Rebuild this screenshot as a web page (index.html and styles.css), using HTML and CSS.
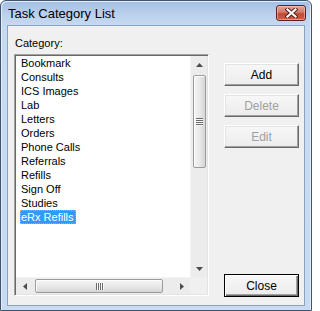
FILE: index.html
```html
<!DOCTYPE html>
<html>
<head>
<meta charset="utf-8">
<link rel="stylesheet" href="styles.css">
</head>
<body>
<div class="window">
  <div class="titlebar">
    <span class="title">Task Category List</span>
    <div class="close-x">
      <svg width="13" height="10" viewBox="0 0 13 10">
        <path d="M2.5 1.5 L10.5 8.5 M10.5 1.5 L2.5 8.5" stroke="#4a1c16" stroke-width="4" stroke-linecap="square" fill="none"/>
        <path d="M2.5 1.5 L10.5 8.5 M10.5 1.5 L2.5 8.5" stroke="#ffffff" stroke-width="2.2" stroke-linecap="square" fill="none"/>
      </svg>
    </div>
  </div>
  <div class="client">
    <div class="leftcol">
      <div class="label">Category:</div>
      <div class="listbox">
        <ul class="items">
          <li><span>Bookmark</span></li>
          <li><span>Consults</span></li>
          <li><span>ICS Images</span></li>
          <li><span>Lab</span></li>
          <li><span>Letters</span></li>
          <li><span>Orders</span></li>
          <li><span>Phone Calls</span></li>
          <li><span>Referrals</span></li>
          <li><span>Refills</span></li>
          <li><span>Sign Off</span></li>
          <li><span>Studies</span></li>
          <li class="selected"><span>eRx Refills</span></li>
        </ul>
        <div class="vscroll">
          <div class="arrow-btn"><svg width="7" height="4" viewBox="0 0 7 4"><polygon points="3.5,0 7,4 0,4" fill="#4d4d4d"/></svg></div>
          <div class="vtrack">
            <div class="vthumb">
              <div class="grip-h"><i></i><i></i><i></i><i></i></div>
            </div>
          </div>
          <div class="arrow-btn"><svg width="7" height="4" viewBox="0 0 7 4"><polygon points="0,0 7,0 3.5,4" fill="#4d4d4d"/></svg></div>
        </div>
        <div class="hscroll">
          <div class="arrow-btn"><svg width="4" height="7" viewBox="0 0 4 7"><polygon points="4,0 4,7 0,3.5" fill="#4d4d4d"/></svg></div>
          <div class="htrack">
            <div class="hthumb">
              <div class="grip-v"><i></i><i></i><i></i><i></i></div>
            </div>
          </div>
          <div class="arrow-btn"><svg width="4" height="7" viewBox="0 0 4 7"><polygon points="0,0 4,3.5 0,7" fill="#4d4d4d"/></svg></div>
        </div>
        <div class="corner"></div>
      </div>
    </div>
    <div class="rightcol">
      <button class="btn">Add</button>
      <button class="btn disabled">Delete</button>
      <button class="btn disabled">Edit</button>
      <button class="btn default close-btn">Close</button>
    </div>
  </div>
</div>
</body>
</html>
```
FILE: styles.css
```css
html, body {
  margin: 0;
  padding: 0;
  background: #ffffff;
}

body {
  font-family: "Liberation Sans", Arial, sans-serif;
  font-size: 11px;
  color: #000;
}

.window {
  width: 312px;
  height: 311px;
  box-sizing: border-box;
  border: 1px solid #3f5470;
  border-radius: 6px 6px 0 0;
  background: linear-gradient(to bottom, #a3bfe4 0px, #bcd1ec 14px, #c8daf0 26px, #c9dbf0 100%);
  padding: 0 6px 4px 6px;
  display: flex;
  flex-direction: column;
  box-shadow: inset 1px 1px 0 #e4edf8, inset -1px 0 0 #e4edf8;
}

.titlebar {
  height: 24px;
  display: flex;
  align-items: flex-start;
  flex-shrink: 0;
}

.title {
  font-family: "Liberation Sans", Arial, sans-serif;
  font-size: 13px;
  line-height: 25px;
  padding-left: 1px;
  color: #000;
}

.close-x {
  margin-left: auto;
  margin-right: -1px;
  margin-top: 4px;
  width: 30px;
  height: 16px;
  box-sizing: border-box;
  border: 1px solid #5e241c;
  border-radius: 3px;
  background: linear-gradient(to bottom, #e5a597 0%, #d27a68 45%, #c24a34 55%, #c9614a 100%);
  display: flex;
  align-items: center;
  justify-content: center;
  box-shadow: inset 0 0 0 1px rgba(255, 220, 210, 0.45);
}

.client {
  flex: 1;
  border: 1px solid #8ba2c1;
  background: #f0f0f0;
  display: flex;
  padding: 10px 5px 0 6px;
  gap: 15px;
}

.leftcol {
  display: flex;
  flex-direction: column;
}

.label {
  height: 14px;
  line-height: 14px;
  padding-left: 1px;
  margin-bottom: 4px;
}

.listbox {
  width: 195px;
  height: 242px;
  box-sizing: border-box;
  border: 1px solid;
  border-color: #a0a0a0 #ffffff #ffffff #a0a0a0;
  box-shadow: inset 1px 1px 0 #696969, inset -1px -1px 0 #e3e3e3;
  padding: 1px;
  background: #ffffff;
  display: grid;
  grid-template-columns: 1fr 17px;
  grid-template-rows: 1fr 17px;
}

.items {
  list-style: none;
  margin: 0;
  padding: 0;
  overflow: hidden;
}

.items li {
  height: 14px;
  line-height: 14px;
  padding-left: 4px;
  white-space: nowrap;
}

.items li span {
  display: inline-block;
  padding: 0 2px 0 1px;
  height: 14px;
  box-sizing: border-box;
}

.items li.selected span {
  background: #3399ff;
  color: #ffffff;
  outline: 1px dotted #ff9a3c;
  outline-offset: -1px;
}

.vscroll {
  background: #ececec;
  border-left: 1px solid #f4f4f4;
  display: flex;
  flex-direction: column;
}

.arrow-btn {
  flex: 0 0 17px;
  height: 17px;
  display: flex;
  align-items: center;
  justify-content: center;
}

.vtrack {
  flex: 1;
  padding: 2px 1px 0 2px;
}

.vthumb {
  height: 93px;
  box-sizing: border-box;
  border: 1px solid #9b9b9b;
  border-radius: 2px;
  background: linear-gradient(to right, #f5f5f5 0%, #e9e9e9 50%, #d6d6d6 100%);
  box-shadow: inset 1px 1px 0 #fdfdfd;
  display: flex;
  align-items: center;
  justify-content: center;
}

.grip-h {
  display: flex;
  flex-direction: column;
  gap: 1px;
}

.grip-h i {
  display: block;
  width: 7px;
  height: 1px;
  background: #6a6a6a;
  box-shadow: 0 1px 0 #f8f8f8;
}

.hscroll {
  background: #ececec;
  border-top: 1px solid #f4f4f4;
  display: flex;
  flex-direction: row;
}

.hscroll .arrow-btn {
  width: 17px;
  height: auto;
}

.htrack {
  flex: 1;
  padding: 1px 0 1px 2px;
}

.hthumb {
  width: 128px;
  height: 100%;
  box-sizing: border-box;
  border: 1px solid #9b9b9b;
  border-radius: 2px;
  background: linear-gradient(to bottom, #f5f5f5 0%, #e9e9e9 50%, #d6d6d6 100%);
  box-shadow: inset 1px 1px 0 #fdfdfd;
  display: flex;
  align-items: center;
  justify-content: center;
}

.grip-v {
  display: flex;
  flex-direction: row;
  gap: 1px;
}

.grip-v i {
  display: block;
  width: 1px;
  height: 7px;
  background: #6a6a6a;
  box-shadow: 1px 0 0 #f8f8f8;
}

.corner {
  background: #f0f0f0;
}

.rightcol {
  display: flex;
  flex-direction: column;
  gap: 8px;
  padding-top: 27px;
  padding-bottom: 8px;
}

.btn {
  width: 75px;
  height: 23px;
  box-sizing: border-box;
  margin: 0;
  padding: 0;
  font-family: "Liberation Sans", Arial, sans-serif;
  font-size: 12px;
  color: #000;
  border: 1px solid;
  border-color: #ffffff #696969 #696969 #ffffff;
  box-shadow: inset -1px -1px 0 #a0a0a0, inset 1px 1px 0 #e3e3e3;
  background: linear-gradient(to bottom, #f7f7f7 0%, #ececec 100%);
}

.btn.disabled {
  color: #a0a0a0;
}

.btn.default {
  border: 1px solid #000;
  box-shadow: inset 1px 1px 0 #ffffff, inset -1px -1px 0 #696969, inset -2px -2px 0 #a0a0a0;
}

.close-btn {
  margin-top: auto;
}
```
